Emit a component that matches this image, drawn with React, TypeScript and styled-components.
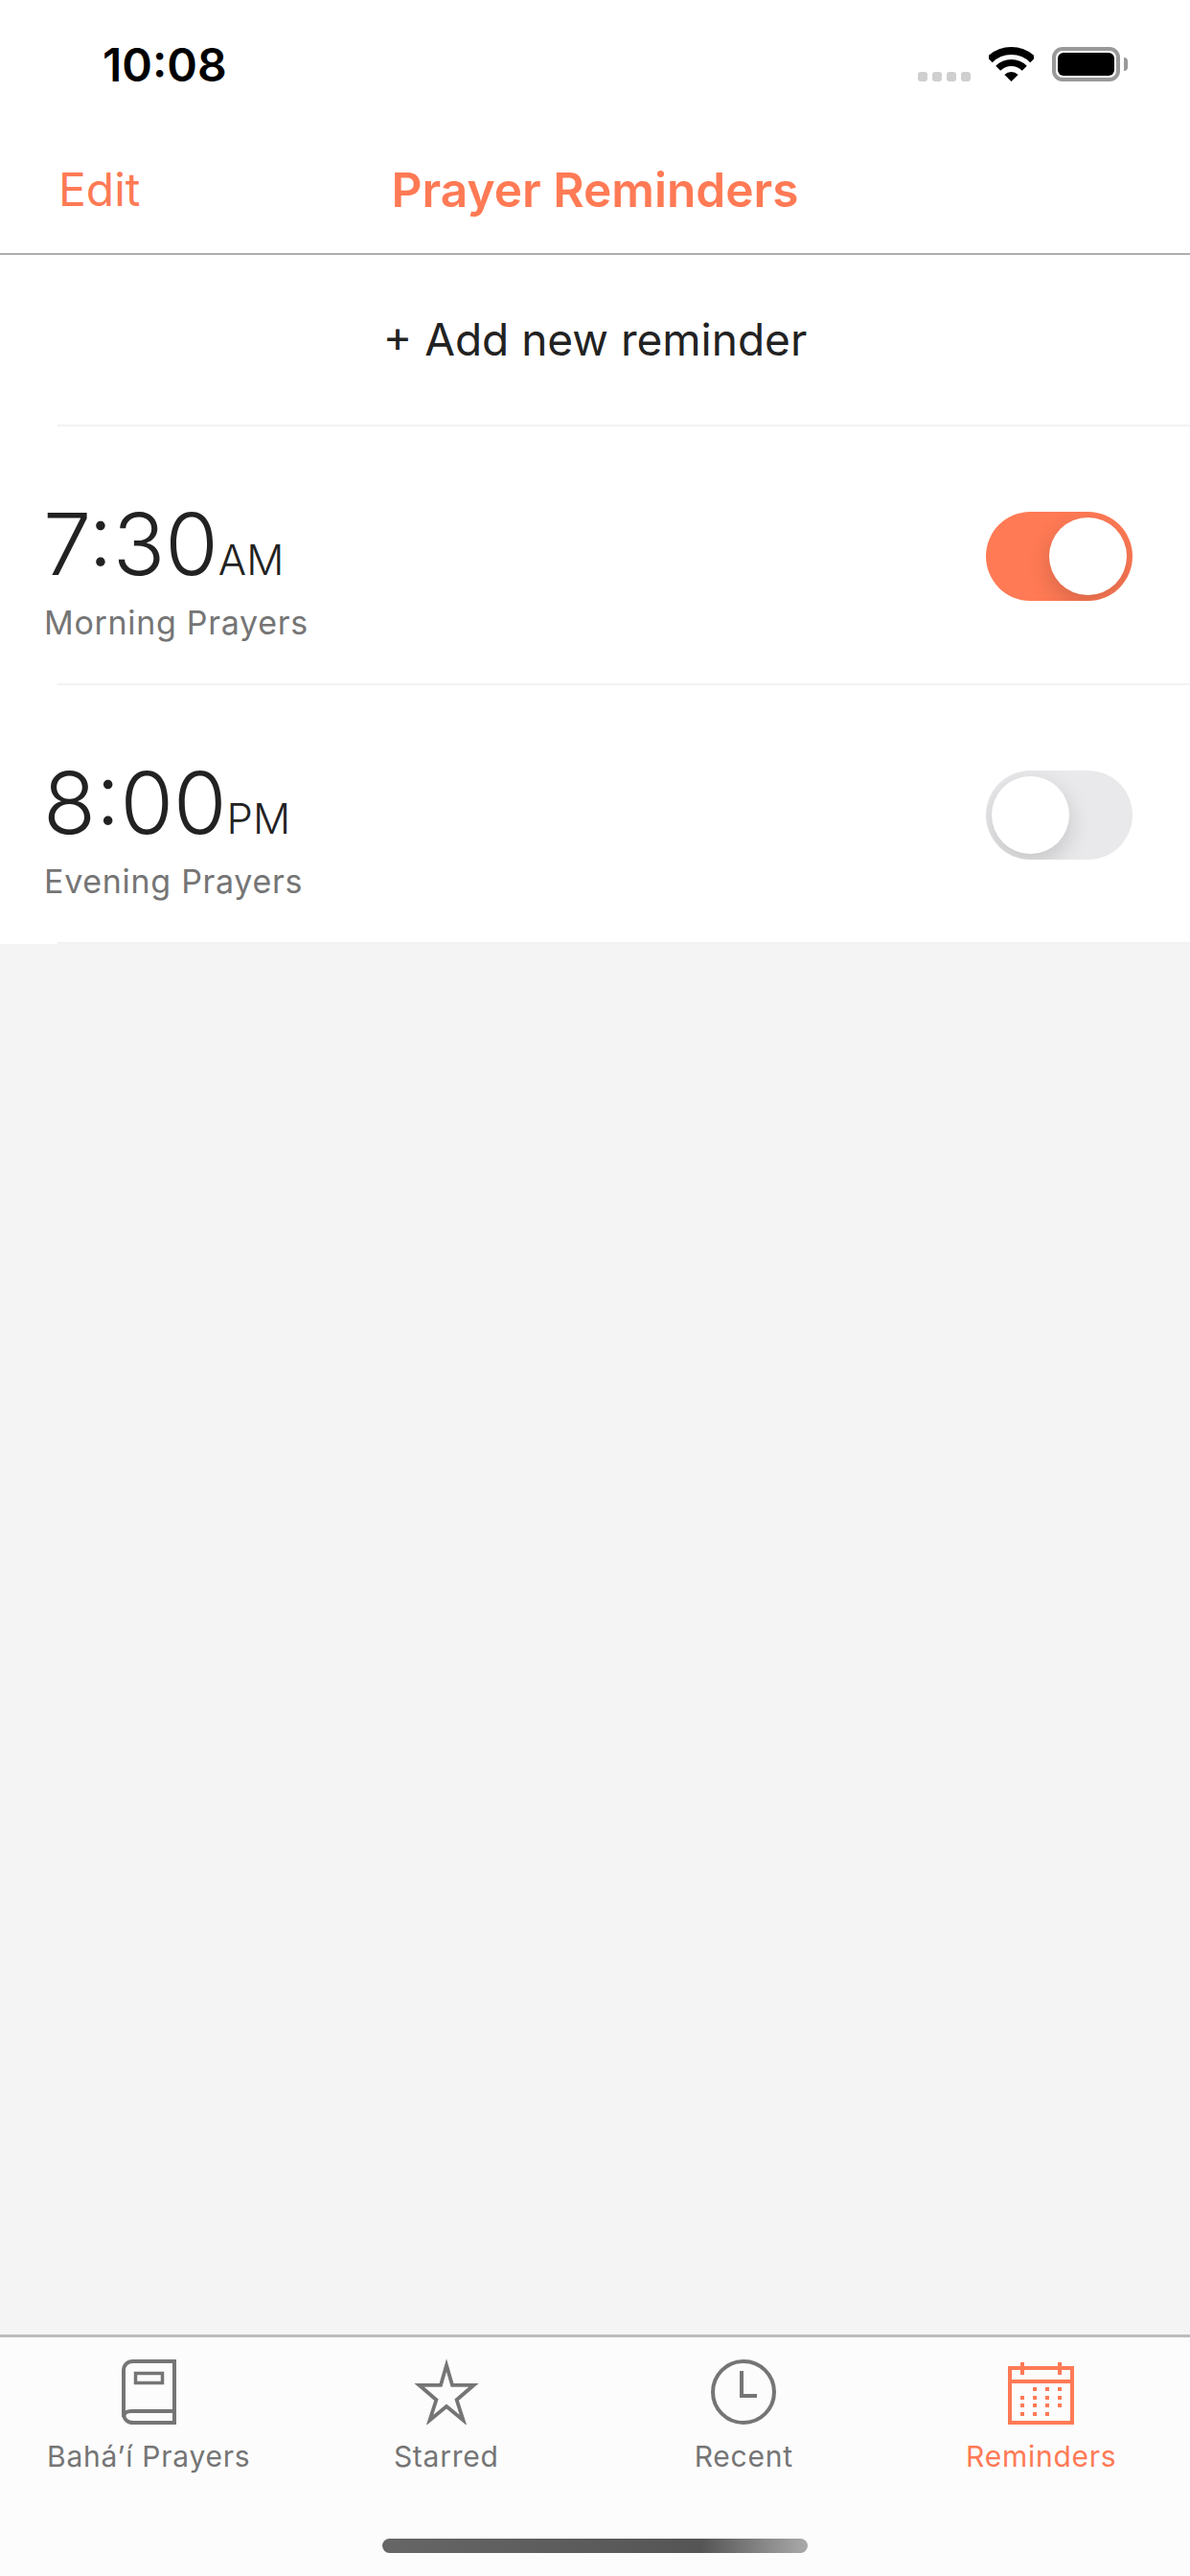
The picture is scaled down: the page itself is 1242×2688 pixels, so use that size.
import * as React from 'react';
import styled, { createGlobalStyle } from 'styled-components';

const ACCENT = '#ff7a55';
const GREY = '#757575';

const GlobalStyle = createGlobalStyle`
  html, body {
    margin: 0;
    padding: 0;
    background: #f4f4f4;
    font-family: Inter, "Noto Sans", sans-serif;
  }
`;

const Screen = styled.div`
  display: flex;
  flex-direction: column;
  width: 1242px;
  height: 2688px;
  overflow: hidden;
`;

const StatusBar = styled.div`
  display: flex;
  justify-content: space-between;
  align-items: flex-start;
  height: 132px;
  padding: 0 73px 0 107px;
  box-sizing: border-box;
  background: #fff;
`;

const Clock = styled.div`
  margin-top: 44px;
  font-size: 48px;
  line-height: 48px;
  font-weight: 600;
  color: #000;
`;

const StatusIcons = styled.div`
  display: flex;
  align-items: flex-end;
  gap: 19px;
  margin-top: 49px;
`;

const SignalDots = styled.div`
  display: flex;
  gap: 5px;
`;

const SignalDot = styled.div`
  width: 10px;
  height: 10px;
  border-radius: 3px;
  background: #cfcfcf;
`;

const Battery = styled.div`
  position: relative;
  width: 71px;
  height: 36px;
  box-sizing: border-box;
  padding: 2px;
  border: 4px solid #999;
  border-radius: 11px;

  &::after {
    content: '';
    position: absolute;
    right: -12px;
    top: 7px;
    width: 4px;
    height: 14px;
    border-radius: 0 4px 4px 0;
    background: #999;
  }
`;

const BatteryFill = styled.div`
  height: 100%;
  border-radius: 6px;
  background: #000;
`;

const NavBar = styled.div`
  display: grid;
  grid-template-columns: 1fr auto 1fr;
  align-items: center;
  height: 134px;
  padding: 0 61px;
  box-sizing: border-box;
  background: #fff;
  border-bottom: 2px solid #aeaeae;
`;

const NavAction = styled.div`
  font-size: 48px;
  line-height: 132px;
  color: ${ACCENT};
`;

const NavTitle = styled.div`
  font-size: 49.6px;
  line-height: 132px;
  font-weight: 600;
  color: ${ACCENT};
`;

const List = styled.div`
  display: flex;
  flex-direction: column;
  background: #fff;
`;

const AddRow = styled.div`
  height: 177px;
  line-height: 177px;
  text-align: center;
  font-size: 46px;
  color: #222;
`;

const Divider = styled.div`
  height: 2px;
  margin-left: 60px;
  background: #f2f2f2;
`;

const Row = styled.div`
  display: flex;
  justify-content: space-between;
  align-items: flex-start;
  height: 268px;
  padding: 79px 60px 0 45px;
  box-sizing: border-box;
`;

const Info = styled.div`
  display: flex;
  flex-direction: column;
  gap: 18px;
`;

const TimeLine = styled.div`
  display: flex;
  align-items: baseline;
  height: 88px;
  color: #222;
`;

const TimeValue = styled.span`
  font-size: 90px;
  line-height: 88px;
  font-weight: 300;
`;

const Meridiem = styled.span`
  font-size: 43.5px;
  line-height: 44px;
  font-weight: 300;
`;

const Subtitle = styled.div`
  padding-left: 1px;
  font-size: 34px;
  line-height: 40px;
  letter-spacing: 0.7px;
  color: ${GREY};
`;

const Track = styled.div<{ $on: boolean }>`
  display: flex;
  justify-content: ${(p) => (p.$on ? 'flex-end' : 'flex-start')};
  width: 153px;
  height: 93px;
  margin-top: 10px;
  padding: 6px;
  box-sizing: border-box;
  border-radius: 47px;
  overflow: hidden;
  background: ${(p) => (p.$on ? ACCENT : '#e9e9eb')};
`;

const Knob = styled.div`
  width: 81px;
  height: 81px;
  border-radius: 50%;
  background: #fff;
  box-shadow: 0 9px 24px rgba(0, 0, 0, 0.16);
`;

const Spacer = styled.div`
  flex-grow: 1;
`;

const TabBar = styled.div`
  display: flex;
  flex-direction: column;
  height: 252px;
  box-sizing: border-box;
  background: #fcfcfc;
  border-top: 3px solid #bcbcbc;
`;

const TabRow = styled.div`
  display: grid;
  grid-template-columns: repeat(4, 1fr);
  padding-top: 22px;
`;

const Tab = styled.div<{ $active?: boolean }>`
  display: flex;
  flex-direction: column;
  align-items: center;
  color: ${(p) => (p.$active ? ACCENT : GREY)};
`;

const TabIcon = styled.div`
  display: flex;
  align-items: flex-end;
  height: 69px;
`;

const TabLabel = styled.div`
  margin-top: 15px;
  font-size: 30px;
  line-height: 36px;
  letter-spacing: 0.75px;
`;

const HomeIndicator = styled.div`
  width: 444px;
  height: 15px;
  margin: 68px auto 0;
  border-radius: 8px;
  background: linear-gradient(90deg, #666 0%, #555 75%, #aaa 100%);
`;

const WifiIcon = () => (
  <svg width="47" height="36" viewBox="0 0 47 36">
    <path d="M0.9 13.4A32 32 0 0 1 46.1 13.4" fill="none" stroke="#000" strokeWidth="8" />
    <path d="M9.7 22.2A19.5 19.5 0 0 1 37.3 22.2" fill="none" stroke="#000" strokeWidth="7" />
    <path d="M23.5 36L16.4 28.9A10 10 0 0 1 30.6 28.9Z" fill="#000" />
  </svg>
);

const BookIcon = () => (
  <svg width="57" height="68" viewBox="0 0 57 68" fill="none" stroke="currentColor" strokeWidth="4">
    <path d="M55 2H12C6 2 2 6 2 12V56C2 62 6 66 12 66H55Z" />
    <path d="M2 60C2 56 6 54 10 54H55" />
    <rect x="14.5" y="14.5" width="28" height="10" strokeWidth="3.5" />
  </svg>
);

const StarIcon = () => (
  <svg width="68" height="69" viewBox="0 0 68 69" fill="none" stroke="currentColor" strokeWidth="3.8">
    <path d="M34 7L40 27.8H62.5L44.6 43.2L51.5 64.5L34 50L16.5 64.5L23.4 43.2L5.5 27.8H28Z" />
  </svg>
);

const ClockIcon = () => (
  <svg width="68" height="68" viewBox="0 0 68 68" fill="none" stroke="currentColor" strokeWidth="4">
    <circle cx="34" cy="34" r="32" />
    <path d="M32 12V38H48" />
  </svg>
);

const CALENDAR_DOTS = [
  [28, 28], [41, 28], [54, 28],
  [15, 37], [28, 37], [41, 37], [54, 37],
  [15, 45], [28, 45], [41, 45], [54, 45],
  [15, 54], [28, 54], [41, 54],
];

const CalendarIcon = () => (
  <svg width="69" height="65" viewBox="0 0 69 65" fill="none" stroke="currentColor" strokeWidth="4">
    <rect x="2" y="6" width="65" height="57" />
    <path d="M2 20H67M15 0V13M54 0V13" />
    {CALENDAR_DOTS.map(([x, y]) => (
      <rect key={`${x}-${y}`} x={x - 2} y={y - 2} width="4" height="4" fill="currentColor" stroke="none" />
    ))}
  </svg>
);

const reminders = [
  { time: '7:30', meridiem: 'AM', label: 'Morning Prayers', on: true },
  { time: '8:00', meridiem: 'PM', label: 'Evening Prayers', on: false },
];

export default function App() {
  return (
    <Screen>
      <GlobalStyle />
      <StatusBar>
        <Clock>10:08</Clock>
        <StatusIcons>
          <SignalDots>
            <SignalDot />
            <SignalDot />
            <SignalDot />
            <SignalDot />
          </SignalDots>
          <WifiIcon />
          <Battery>
            <BatteryFill />
          </Battery>
        </StatusIcons>
      </StatusBar>
      <NavBar>
        <NavAction>Edit</NavAction>
        <NavTitle>Prayer Reminders</NavTitle>
        <div />
      </NavBar>
      <List>
        <AddRow>+ Add new reminder</AddRow>
        <Divider />
        {reminders.map((r) => (
          <React.Fragment key={r.label}>
            <Row>
              <Info>
                <TimeLine>
                  <TimeValue>{r.time}</TimeValue>
                  <Meridiem>{r.meridiem}</Meridiem>
                </TimeLine>
                <Subtitle>{r.label}</Subtitle>
              </Info>
              <Track $on={r.on}>
                <Knob />
              </Track>
            </Row>
            <Divider />
          </React.Fragment>
        ))}
      </List>
      <Spacer />
      <TabBar>
        <TabRow>
          <Tab>
            <TabIcon><BookIcon /></TabIcon>
            <TabLabel>Bahá’í Prayers</TabLabel>
          </Tab>
          <Tab>
            <TabIcon><StarIcon /></TabIcon>
            <TabLabel>Starred</TabLabel>
          </Tab>
          <Tab>
            <TabIcon><ClockIcon /></TabIcon>
            <TabLabel>Recent</TabLabel>
          </Tab>
          <Tab $active>
            <TabIcon><CalendarIcon /></TabIcon>
            <TabLabel>Reminders</TabLabel>
          </Tab>
        </TabRow>
        <HomeIndicator />
      </TabBar>
    </Screen>
  );
}
